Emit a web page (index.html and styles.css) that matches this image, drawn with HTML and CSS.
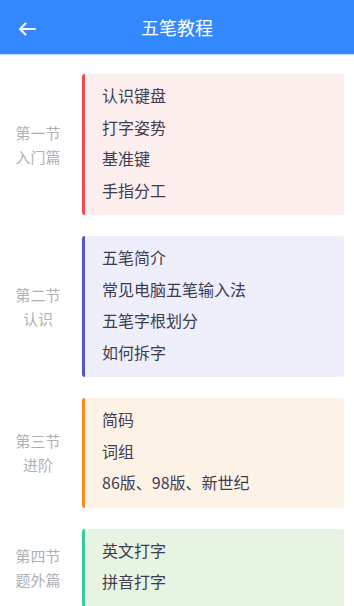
FILE: index.html
```html
<!DOCTYPE html>
<html lang="zh">
<head>
<meta charset="utf-8">
<link rel="stylesheet" href="styles.css">
</head>
<body>
<header class="topbar">
  <svg class="back" width="18" height="14" viewBox="0 0 18 14" aria-hidden="true">
    <path d="M17 7H2M7.5 1.5L2 7l5.5 5.5" fill="none" stroke="#fff" stroke-width="2" stroke-linecap="round" stroke-linejoin="round"/>
  </svg>
  <h1 class="title">五笔教程</h1>
</header>
<main class="list">
  <section class="row">
    <div class="label">第一节<br>入门篇</div>
    <div class="card red">
      <div class="item">认识键盘</div>
      <div class="item">打字姿势</div>
      <div class="item">基准键</div>
      <div class="item">手指分工</div>
    </div>
  </section>
  <section class="row">
    <div class="label">第二节<br>认识</div>
    <div class="card blue">
      <div class="item">五笔简介</div>
      <div class="item">常见电脑五笔输入法</div>
      <div class="item">五笔字根划分</div>
      <div class="item">如何拆字</div>
    </div>
  </section>
  <section class="row">
    <div class="label">第三节<br>进阶</div>
    <div class="card orange">
      <div class="item">简码</div>
      <div class="item">词组</div>
      <div class="item">86版、98版、新世纪</div>
    </div>
  </section>
  <section class="row">
    <div class="label">第四节<br>题外篇</div>
    <div class="card green">
      <div class="item">英文打字</div>
      <div class="item">拼音打字</div>
    </div>
  </section>
</main>
</body>
</html>
```
FILE: styles.css
```css
html, body {
  margin: 0;
  padding: 0;
  background: #ffffff;
  font-family: "Noto Sans CJK SC", "Noto Sans", sans-serif;
}
body {
  width: 354px;
  height: 606px;
  overflow: hidden;
}
.topbar {
  height: 54px;
  background: #3388ff;
  position: relative;
  display: flex;
  align-items: center;
  justify-content: center;
  box-shadow: 0 1px 1px rgba(51, 136, 255, 0.35);
}
.back {
  position: absolute;
  left: 18px;
  top: 22px;
}
.title {
  margin: 0;
  color: #ffffff;
  font-size: 18px;
  font-weight: 400;
  line-height: 24px;
  letter-spacing: 0px;
}
.list {
  display: flex;
  flex-direction: column;
  gap: 21px;
  padding: 20px 10px 0 0;
}
.row {
  display: flex;
  align-items: center;
}
.label {
  width: 76px;
  margin-right: 6px;
  text-align: center;
  color: #b0b0b4;
  font-size: 15px;
  line-height: 24px;
}
.card {
  flex: 1;
  border-left: 3px solid;
  border-radius: 3px;
  padding: 6px 0 9px 17px;
}
.item {
  color: #3d3d52;
  font-size: 16px;
  line-height: 31.5px;
  height: 31.5px;
}
.red { background: #fdeeee; border-left-color: #f2484e; }
.blue { background: #efeffb; border-left-color: #5452cc; }
.orange { background: #fdf2e6; border-left-color: #ff8a1c; }
.green { background: #e6f4e1; border-left-color: #36cc99; }
```
